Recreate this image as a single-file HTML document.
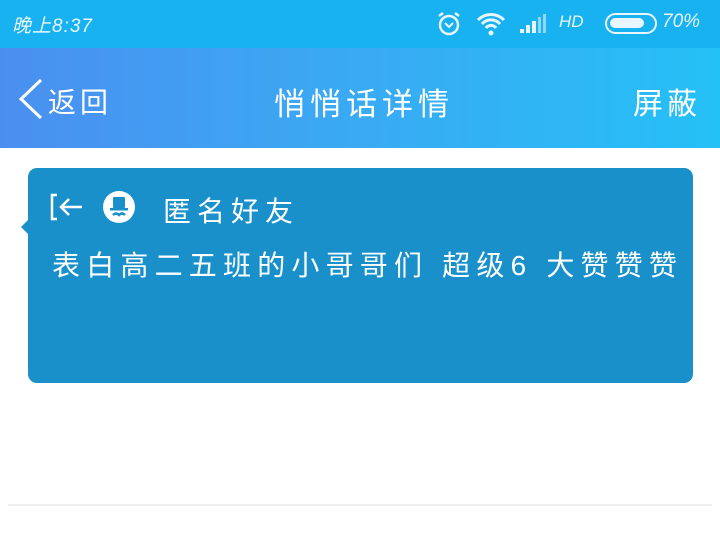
<!DOCTYPE html>
<html><head><meta charset="utf-8">
<style>
*{margin:0;padding:0;box-sizing:border-box}
body{width:720px;height:557px;background:#fff;font-family:"Liberation Sans","Noto Sans CJK SC",sans-serif;position:relative;overflow:hidden}
.status{position:absolute;left:0;top:0;width:720px;height:48px;background:#17b2ef;color:#e8f6ff}
.nav{position:absolute;left:0;top:48px;width:720px;height:100px;background:linear-gradient(90deg,#4a8ff0 0%,#3ba8f3 45%,#25c0f6 100%);color:#fff}
.card{position:absolute;left:28px;top:168px;width:665px;height:215px;background:#1a90cb;border-radius:9px;color:#fff}
.card:before{content:"";position:absolute;left:-7px;top:52px;border-top:7px solid transparent;border-bottom:7px solid transparent;border-right:7px solid #1a90cb}
.line{position:absolute;left:8px;top:504px;width:704px;height:2px;background:#eef0f2}
</style></head><body>
<div class="status">
 <div style="position:absolute;left:12px;top:11px;font-size:19px;font-style:italic;letter-spacing:1px">晚上8:37</div>
 <svg style="position:absolute;left:436px;top:10px" width="26" height="28" viewBox="0 0 26 28"><circle cx="13" cy="15" r="9" fill="none" stroke="#e8f6ff" stroke-width="2.5"/><path d="M9 13l4 4 4-4" fill="none" stroke="#e8f6ff" stroke-width="2"/><path d="M3 6l4-3M23 6l-4-3" stroke="#e8f6ff" stroke-width="2.5"/></svg>
 <svg style="position:absolute;left:476px;top:12px" width="30" height="24" viewBox="0 0 30 24"><path d="M2 8a18 18 0 0 1 26 0M6 12a12 12 0 0 1 18 0M10 16a6 6 0 0 1 10 0" fill="none" stroke="#e8f6ff" stroke-width="3"/><circle cx="15" cy="21" r="2.5" fill="#e8f6ff"/></svg>
 <svg style="position:absolute;left:520px;top:14px" width="30" height="20"><rect x="0" y="15" width="4" height="4" fill="#e8f6ff"/><rect x="6" y="11" width="4" height="8" fill="#e8f6ff"/><rect x="12" y="7" width="4" height="12" fill="#e8f6ff"/><rect x="18" y="3" width="3" height="16" fill="#8fd6f7"/><rect x="23" y="0" width="3" height="19" fill="#8fd6f7"/></svg>
 <div style="position:absolute;left:559px;top:12px;font-size:17px;font-style:italic">HD</div>
 <div style="position:absolute;left:605px;top:13px;width:52px;height:21px;border:2.5px solid #e8f6ff;border-radius:11px"><div style="position:absolute;left:3px;top:3px;width:34px;height:10px;background:#e8f6ff;border-radius:5px"></div></div>
 <div style="position:absolute;left:662px;top:11px;font-size:19px;font-style:italic">70%</div>
</div>
<div class="nav">
 <svg style="position:absolute;left:17px;top:30px" width="28" height="42"><path d="M24 2L4 21l20 19" fill="none" stroke="#fff" stroke-width="3"/></svg>
 <div style="position:absolute;left:48px;top:33px;font-size:28px;letter-spacing:4px">返回</div>
 <div style="position:absolute;left:4px;width:720px;top:31px;text-align:center;font-size:31px;letter-spacing:5px">悄悄话详情</div>
 <div style="position:absolute;left:633px;top:31px;font-size:30px;letter-spacing:4px">屏蔽</div>
</div>
<div class="card">
 <svg style="position:absolute;left:21px;top:24px" width="36" height="30"><path d="M8 3H3v24h5" fill="none" stroke="#fff" stroke-width="2.5"/><path d="M33 15H12M20 7l-8 8 8 8" fill="none" stroke="#fff" stroke-width="2.5"/></svg>
 <svg style="position:absolute;left:74px;top:22px" width="34" height="34"><circle cx="17" cy="17" r="16" fill="#fff"/><rect x="11" y="7" width="12" height="11" rx="1" fill="#1a90cb"/><rect x="8" y="18" width="18" height="2.5" fill="#1a90cb"/><path d="M11 25q3-3 6 0q3-3 6 0" fill="none" stroke="#1a90cb" stroke-width="2.5"/></svg>
 <div style="position:absolute;left:135px;top:22px;font-size:28px;letter-spacing:6px">匿名好友</div>
 <div style="position:absolute;left:24px;top:76px;font-size:28px;letter-spacing:6.2px;white-space:nowrap">表白高二五班的小哥哥们 超级6 大赞赞赞</div>
</div>
<div class="line"></div>
</body></html>
